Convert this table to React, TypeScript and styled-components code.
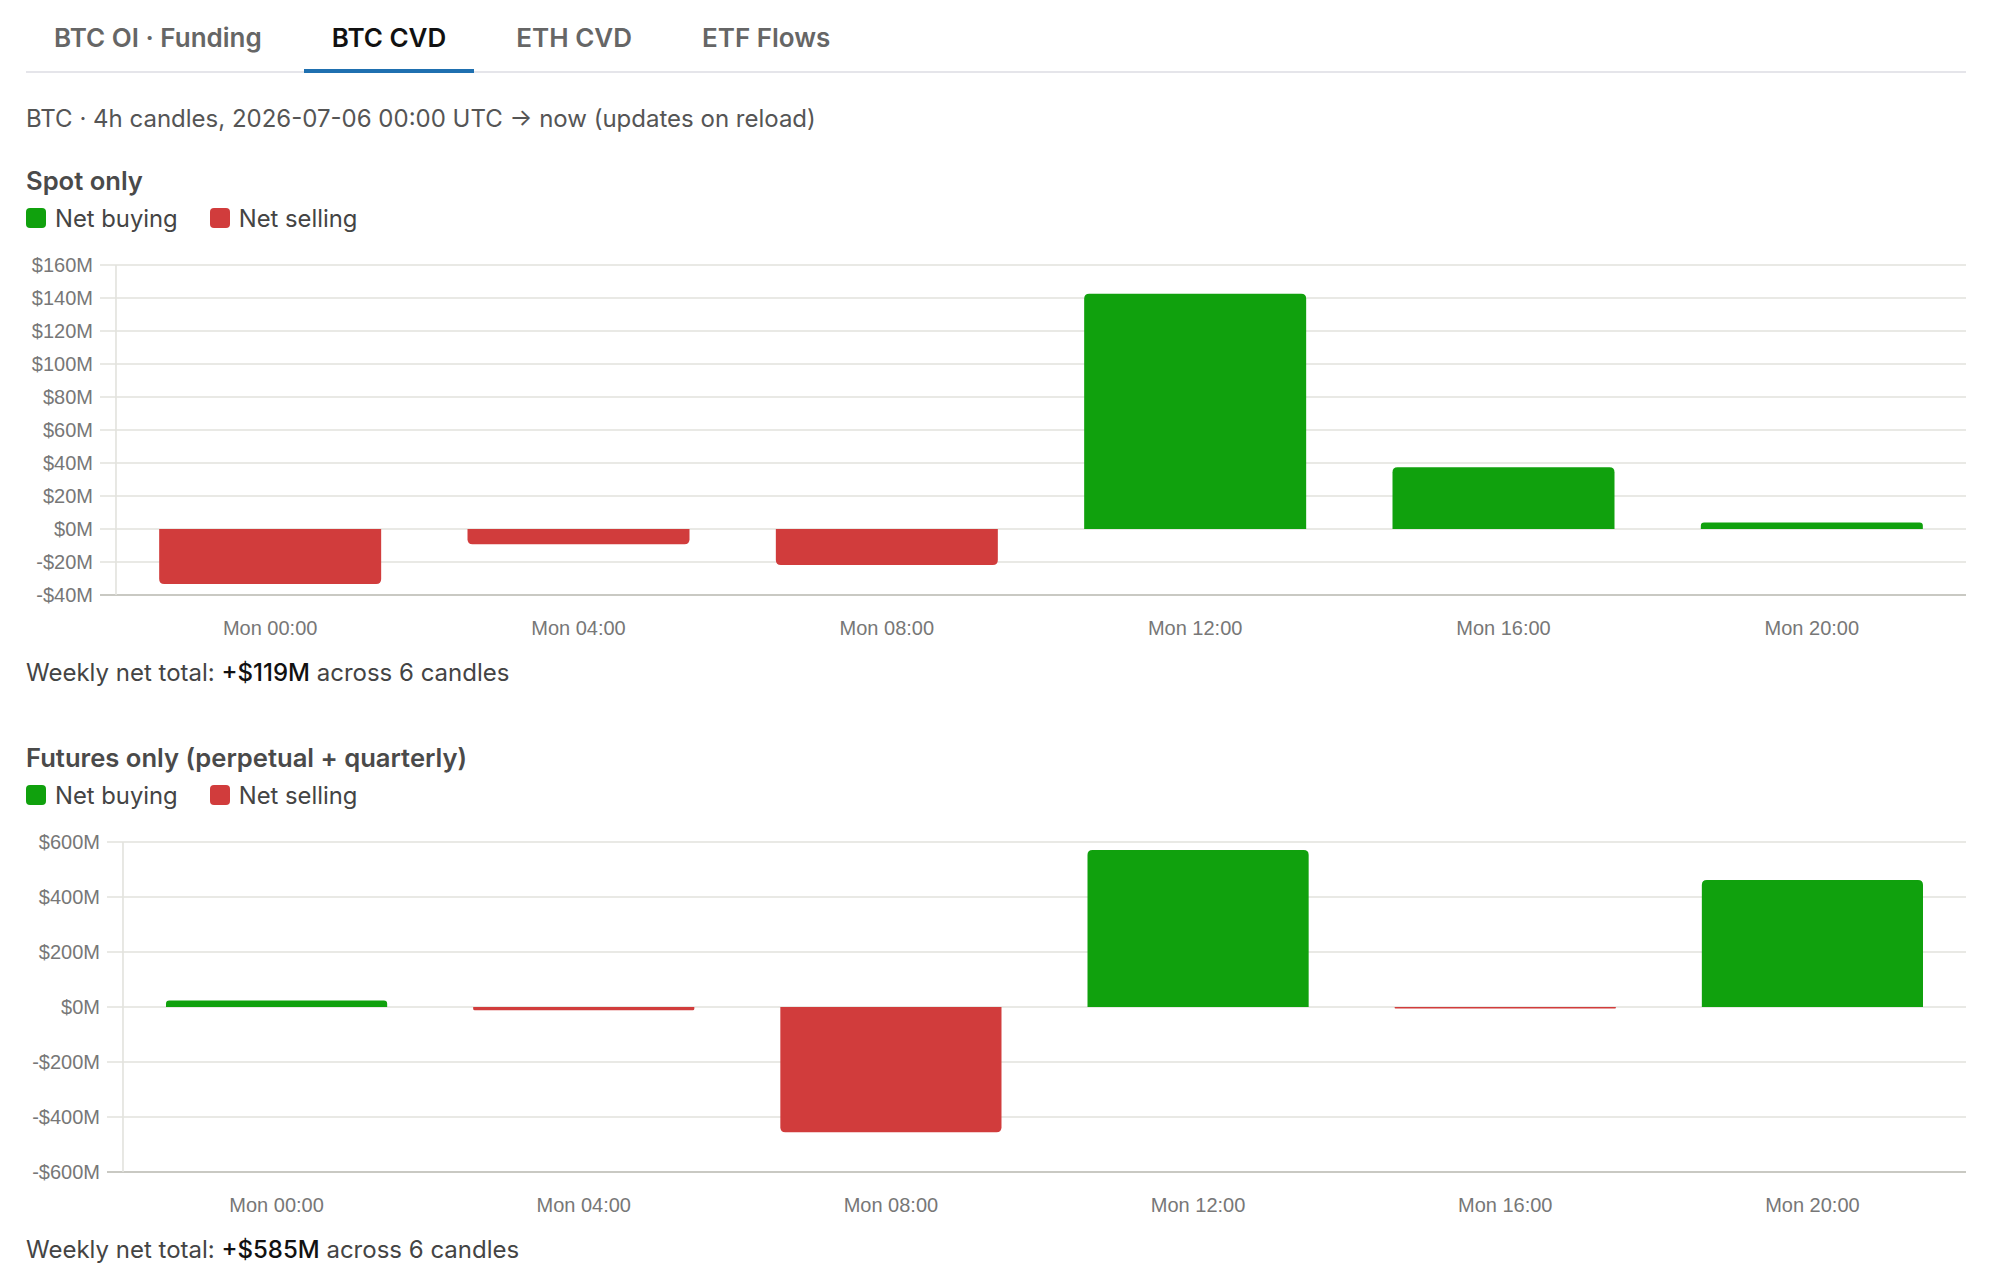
import styled, { createGlobalStyle } from 'styled-components'

const GlobalStyle = createGlobalStyle`
  html, body {
    margin: 0;
    padding: 0;
    background: #fff;
  }
  body {
    font-family: Inter, "Noto Sans", "Liberation Sans", sans-serif;
    color: #444;
  }
`

const GREEN = '#10a10d'
const RED = '#d13c3c'
const CHART_WIDTH = 1940
const PLOT_TOP = 12
const PLOT_HEIGHT = 330

const Page = styled.div`
  padding: 0 32px 0 26px;
`

const TabBar = styled.div`
  display: flex;
  gap: 14px;
  border-bottom: 2px solid #e5e5ea;
`

const Tab = styled.div<{ $active?: boolean }>`
  padding: 23px 28px 16px;
  line-height: 30px;
  font-size: 26px;
  font-weight: 600;
  color: ${p => (p.$active ? '#111' : '#666')};
  border-bottom: 4px solid ${p => (p.$active ? '#1f70b0' : 'transparent')};
  margin-bottom: -2px;
  cursor: pointer;
`

const Subtitle = styled.div`
  margin-top: 31px;
  line-height: 30px;
  font-size: 24px;
  color: #555;
`

const Section = styled.section<{ $gap: number }>`
  margin-top: ${p => p.$gap}px;
`

const SectionTitle = styled.h3`
  margin: 0;
  line-height: 32px;
  font-size: 25.6px;
  font-weight: 600;
  color: #4a4a4a;
`

const Legend = styled.div`
  margin-top: 7px;
  display: flex;
  gap: 32px;
  height: 28px;
  align-items: center;
`

const LegendItem = styled.div`
  display: flex;
  align-items: center;
  gap: 9px;
  font-size: 23.8px;
  color: #444;
`

const Swatch = styled.span<{ $color: string }>`
  width: 20px;
  height: 20px;
  border-radius: 4px;
  background: ${p => p.$color};
`

const ChartSvg = styled.svg`
  display: block;
  margin-top: 21px;
  font-family: "Liberation Sans", Arial, sans-serif;
  font-size: 20px;
`

const Total = styled.div`
  margin-top: 13px;
  line-height: 30px;
  font-size: 24px;
  color: #444;

  strong {
    font-weight: 500;
    color: #111;
  }
`

interface Candle {
  label: string
  value: number
}

interface ChartProps {
  candles: Candle[]
  min: number
  max: number
  step: number
  labelRight: number
}

const fmt = (v: number) => (v < 0 ? `-$${Math.abs(v)}M` : `$${v}M`)

// bar path with the outer end rounded, the zero end square
function barPath(x: number, w: number, y0: number, y1: number, r: number) {
  const h = Math.abs(y1 - y0)
  const rr = Math.min(r, h / 2, w / 2)
  if (y1 < y0) {
    return `M${x},${y0} V${y1 + rr} Q${x},${y1} ${x + rr},${y1} H${x + w - rr} Q${x + w},${y1} ${x + w},${y1 + rr} V${y0} Z`
  }
  return `M${x},${y0} V${y1 - rr} Q${x},${y1} ${x + rr},${y1} H${x + w - rr} Q${x + w},${y1} ${x + w},${y1 - rr} V${y0} Z`
}

function BarChart({ candles, min, max, step, labelRight }: ChartProps) {
  const tickStart = labelRight + 7
  const axisX = tickStart + 16
  const bottom = PLOT_TOP + PLOT_HEIGHT
  const y = (v: number) => PLOT_TOP + ((max - v) / (max - min)) * PLOT_HEIGHT
  const ticks: number[] = []
  for (let v = max; v >= min; v -= step) ticks.push(v)
  const catW = (CHART_WIDTH - axisX) / candles.length
  const barW = catW * 0.72

  return (
    <ChartSvg width={CHART_WIDTH} height={392}>
      {ticks.map(t => (
        <g key={t}>
          <line
            x1={tickStart}
            x2={CHART_WIDTH}
            y1={y(t)}
            y2={y(t)}
            stroke={t === min ? '#c9c9c3' : '#e2e2dd'}
            strokeWidth={t === min ? 2 : 1.6}
          />
          <text x={labelRight} y={y(t)} textAnchor="end" dominantBaseline="central" fill="#777">
            {fmt(t)}
          </text>
        </g>
      ))}
      <line x1={axisX} x2={axisX} y1={PLOT_TOP} y2={bottom} stroke="#e2e2dd" strokeWidth={1.6} />
      {candles.map((c, i) => {
        const cx = axisX + catW * (i + 0.5)
        return (
          <g key={c.label}>
            <path
              d={barPath(cx - barW / 2, barW, y(0), y(c.value), 5)}
              fill={c.value >= 0 ? GREEN : RED}
            />
            <text x={cx} y={375} textAnchor="middle" dominantBaseline="central" fill="#777">
              {c.label}
            </text>
          </g>
        )
      })}
    </ChartSvg>
  )
}

const labels = ['Mon 00:00', 'Mon 04:00', 'Mon 08:00', 'Mon 12:00', 'Mon 16:00', 'Mon 20:00']
const spot = [-33.3, -9.3, -21.8, 142.6, 37.4, 4.0]
const futures = [24, -12, -455, 571, -5, 462]

const toCandles = (vals: number[]) => vals.map((value, i) => ({ label: labels[i], value }))

function CvdSection({ title, values, min, max, step, labelRight, total, gap }: {
  title: string
  values: number[]
  min: number
  max: number
  step: number
  labelRight: number
  total: string
  gap: number
}) {
  return (
    <Section $gap={gap}>
      <SectionTitle>{title}</SectionTitle>
      <Legend>
        <LegendItem><Swatch $color={GREEN} />Net buying</LegendItem>
        <LegendItem><Swatch $color={RED} />Net selling</LegendItem>
      </Legend>
      <BarChart candles={toCandles(values)} min={min} max={max} step={step} labelRight={labelRight} />
      <Total>
        Weekly net total: <strong>{total}</strong> across {values.length} candles
      </Total>
    </Section>
  )
}

export default function App() {
  const tabs = ['BTC OI · Funding', 'BTC CVD', 'ETH CVD', 'ETF Flows']
  return (
    <>
      <GlobalStyle />
      <Page>
        <TabBar>
          {tabs.map(t => (
            <Tab key={t} $active={t === 'BTC CVD'}>{t}</Tab>
          ))}
        </TabBar>
        <Subtitle>BTC · 4h candles, 2026-07-06 00:00 UTC → now (updates on reload)</Subtitle>
        <CvdSection
          gap={31}
          title="Spot only"
          values={spot}
          min={-40}
          max={160}
          step={20}
          labelRight={67}
          total="+$119M"
        />
        <CvdSection
          gap={54}
          title="Futures only (perpetual + quarterly)"
          values={futures}
          min={-600}
          max={600}
          step={200}
          labelRight={74}
          total="+$585M"
        />
      </Page>
    </>
  )
}
